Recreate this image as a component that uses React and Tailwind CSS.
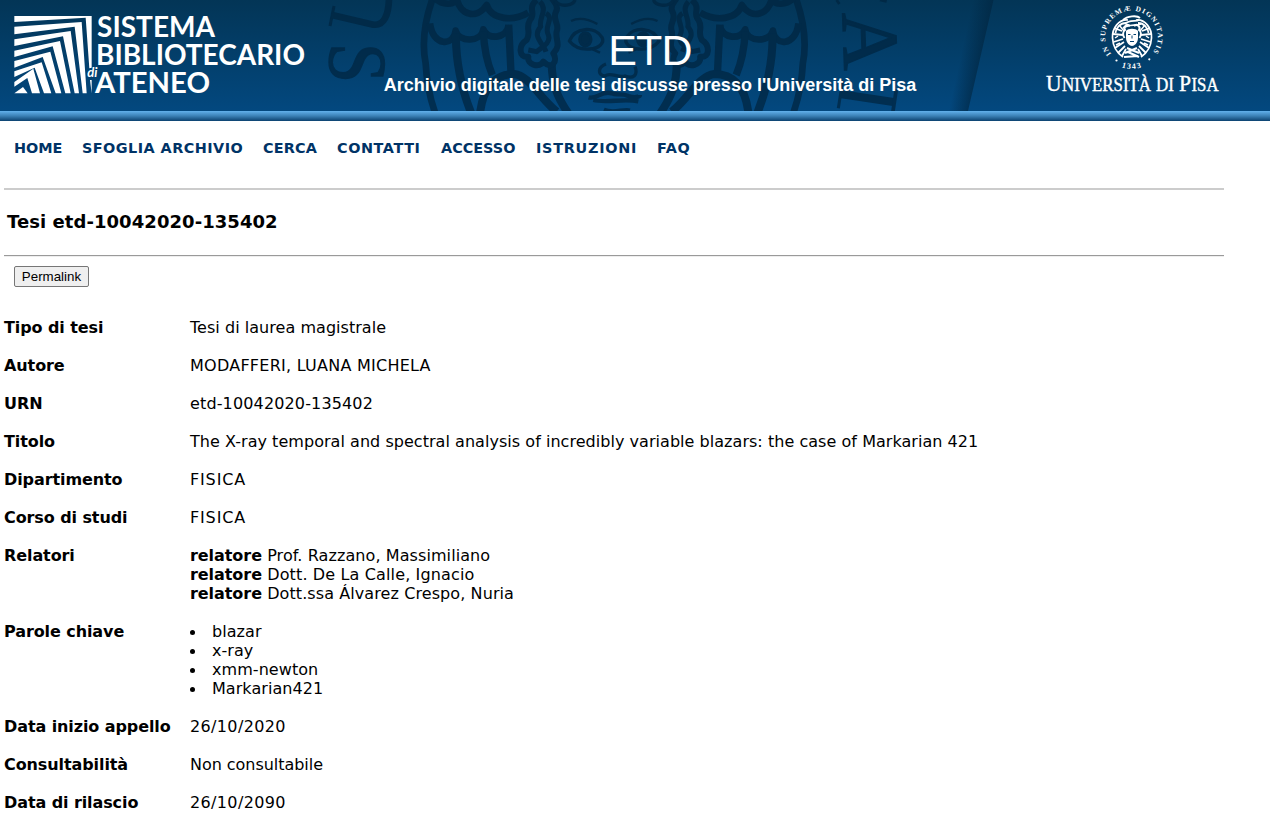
const nav = [
  ["HOME", "w-[68px]"],
  ["SFOGLIA ARCHIVIO", "w-[181px] tracking-[0.46px]"],
  ["CERCA", "w-[74px] tracking-[0.15px]"],
  ["CONTATTI", "w-[104px] tracking-[0.58px]"],
  ["ACCESSO", "w-[95px]"],
  ["ISTRUZIONI", "w-[121px] tracking-[0.74px]"],
  ["FAQ", "tracking-[0.6px]"],
];

const supervisors = [
  ["Prof. Razzano, Massimiliano", "tracking-[0.09px]"],
  ["Dott. De La Calle, Ignacio", "tracking-[0.14px]"],
  ["Dott.ssa Álvarez Crespo, Nuria", "tracking-[0.09px]"],
];
const keywords = ["blazar", "x-ray", "xmm-newton", "Markarian421"];

function Row({ label, track = "", children }) {
  return (
    <div className="flex">
      <dt className="w-[186px] shrink-0 font-bold tracking-[-0.09px]">{label}</dt>
      <dd className={track}>{children}</dd>
    </div>
  );
}

function LibraryLogo() {
  return (
    <svg width="320" height="111" viewBox="0 0 320 111" fill="#fff" className="relative">
      <g transform="scale(0.33333)">
        <path d="M43 48H275V203L268 205L257 53L43 66Z M270 240H275V280Z" />
        <path d="M43 80L245 66L260 280H248L224 80L43 103Z" />
        <path d="M43 118L212 93L237 280H224L189 109L43 138Z" />
        <path d="M43 152L180 123L212 280H196L158 139L43 171Z" />
        <path d="M43 183L151 155L184 280H167L128 171L43 203Z" />
        <path d="M43 214L125 187L154 280H132L104 203L43 231Z" />
        <path d="M43 246L100 206L120 280H96L82 234L43 260Z" />
        <path d="M43 280L69 261L83 280Z" />
      </g>
      <g fontFamily="Lato, sans-serif" fontWeight="700" fontSize="28.5">
        <text x="97" y="37.3" textLength="118" lengthAdjust="spacingAndGlyphs">SISTEMA</text>
        <text x="96" y="65.3" textLength="209" lengthAdjust="spacingAndGlyphs">BIBLIOTECARIO</text>
        <text x="95" y="93.3" textLength="115" lengthAdjust="spacingAndGlyphs">ATENEO</text>
      </g>
      <text x="87.3" y="77.3" fontFamily="Lato, sans-serif" fontStyle="italic" fontWeight="700" fontSize="13">di</text>
    </svg>
  );
}

function Wing() {
  return (
    <g fill="none" stroke="#012540" strokeWidth="20" strokeLinejoin="round">
      <path d="M368 -5C345 60 335 130 347 190C350 250 358 290 376 340" />
      <path d="M360 70C368 140 432 140 437 92C445 128 515 128 520 88C530 120 590 118 596 76" />
      <path d="M438 100C436 180 455 270 484 340" strokeWidth="24" />
      <path d="M520 95C522 140 530 185 547 225" strokeWidth="22" />
      <path d="M596 74L603 218" strokeWidth="22" />
      <path d="M510 340C520 255 560 222 612 222C660 228 685 290 740 335" strokeWidth="24" />
      <path d="M375 -5C400 18 435 15 440 -5C450 45 500 60 530 15C545 60 610 65 655 38" strokeWidth="20" />
      <path d="M725 190C726 250 740 290 775 340" strokeWidth="24" />
      <path d="M680 0C650 25 680 40 660 60C645 85 665 95 650 120C625 135 625 175 655 170C650 195 690 205 700 185C725 210 745 185 730 160C755 135 735 120 740 95C750 70 725 60 738 35C750 15 725 0 725 -8" strokeWidth="18" />
      <path d="M690 5C715 30 685 55 692 80C665 110 700 130 708 155M708 40C735 55 700 80 715 105C725 130 690 145 680 155L655 150" strokeWidth="15" />
      <path d="M735 3C755 25 790 15 795 0" strokeWidth="10" />
      <path d="M783 63C810 50 840 60 862 72" strokeWidth="7" />
      <path d="M778 123C795 80 855 78 876 112C885 130 865 145 840 147C815 149 795 145 778 123Z" strokeWidth="10" />
      <ellipse cx="826" cy="118" rx="17" ry="20" fill="#012540" strokeWidth="9" />
      <path d="M848 148L870 158" strokeWidth="7" />
    </g>
  );
}

function BannerArt() {
  return (
    <svg width="1270" height="111" viewBox="0 0 1270 111" className="absolute left-0 top-0">
      <defs>
        <linearGradient id="fold" x1="962" y1="50" x2="985" y2="55" gradientUnits="userSpaceOnUse">
          <stop offset="0" stopColor="#012641" stopOpacity="0" />
          <stop offset="1" stopColor="#012641" stopOpacity="0.8" />
        </linearGradient>
      </defs>
      <g opacity="0.72">
        <g transform="translate(310 0) scale(0.33333)"><Wing /></g>
        <g transform="translate(918.5 0) scale(-0.33333 0.33333)"><Wing /></g>
        <g transform="translate(310 0) scale(0.33333)" fill="none" stroke="#012540" strokeWidth="10">
          <path d="M888 192C865 200 860 225 885 228C900 215 925 235 945 228C970 238 985 225 975 200" />
          <path d="M836 292C860 300 875 270 905 280C920 287 935 278 955 288C975 295 990 290 990 285M850 300C890 310 940 295 985 304" strokeWidth="13" />
          <path d="M882 328C910 340 940 325 960 330" />
          <path d="M72 18L60 78" strokeWidth="9" />
          <path d="M66 45L190 74C222 78 236 45 237 -5" strokeWidth="20" />
        </g>
        <g transform="translate(620 0) scale(0.33333)" fill="none" stroke="#012540">
          <path d="M668 243L655 325" strokeWidth="9" />
          <path d="M660 282L820 306" strokeWidth="24" />
          <path d="M829 268L818 340" strokeWidth="11" />
          <path d="M650 0L658 12M780 0L800 4" strokeWidth="8" />
        </g>
        <g fill="#012540" stroke="#012540" strokeWidth="1.4" fontFamily="'Liberation Serif', serif">
          <text transform="translate(329.5 43) rotate(90)" fontSize="82" textLength="40" lengthAdjust="spacingAndGlyphs">S</text>
          <text transform="translate(842.5 13) rotate(88)" fontSize="80">A</text>
        </g>
      </g>
      <path d="M970 0H993.5L968 111H948Z" fill="url(#fold)" />
    </svg>
  );
}

function Cherub() {
  return (
    <g>
      <g fill="none" stroke="#fff">
        {[-1, 1].map((s) => (
          <g key={s} transform={`translate(1132 37) scale(${s} 1)`}>
            <path d="M4 -17C13 -18 20 -9 19.5 1C19 10 15 16 9 20" strokeWidth="1.7" />
            <path d="M6 -14C12 -14 16 -9 16.5 -4M10 -6L18 -9M9 -2L19 -3M9 2L18.5 5M8 5L17 11M7 9L14 16M6 12L10 19" strokeWidth="1.8" />
            <path d="M13 -12L8 -6M14 -1L17 1M12 6L16 8" strokeWidth="1.5" />
            <path d="M2 -11C5 -14 9 -10 7 -7C10 -5 9 -1 7.5 1" strokeWidth="2" />
          </g>
        ))}
        <path d="M1123 20C1127 16 1137 15 1140 18M1125 24C1129 19 1136 22 1139 20M1123 28C1128 24 1136 26 1141 24" strokeWidth="1.8" />
        <path d="M1127 48L1139 53M1137 48L1125 53M1124 57L1138 56M1128 52L1139 57" strokeWidth="2.2" />
      </g>
      <path d="M1126 31C1128 28 1136 28 1138 31V38C1138 43 1134 46 1132 46S1126 43 1126 38Z" fill="#fff" />
      <path d="M1128 34.5H1130.5M1133.5 34.5H1136M1132 35.5V38.5M1130 41.5H1134" stroke="#034170" strokeWidth="1" fill="none" />
    </g>
  );
}

function UniversityLogo() {
  return (
    <svg width="290" height="111" viewBox="980 0 290 111" fill="#fff" className="relative">
      <defs>
        <path id="motto" d="M1111.3 53.8A26.3 26.3 0 1 1 1148 57.5" />
        <path id="year" d="M1112 61.8A31.5 31.5 0 0 0 1152 61.8" />
      </defs>
      <Cherub />
      <g fontFamily="'Liberation Serif', serif" fontWeight="700">
        <text fontSize="7.2" letterSpacing="1.25"><textPath href="#motto">IN SUPREMÆ DIGNITATIS</textPath></text>
        <text fontSize="8" textAnchor="middle" letterSpacing="1.3"><textPath href="#year" startOffset="50%">1343</textPath></text>
      </g>
      <circle cx="1116.5" cy="60.5" r="1.1" />
      <circle cx="1149.3" cy="59.3" r="1.1" />
      <g fontFamily="'Liberation Serif', serif" fontSize="18.5" stroke="#fff" strokeWidth="0.4">
        <text x="1046" y="90.7" fontSize="23" textLength="15.5" lengthAdjust="spacingAndGlyphs">U</text>
        <text x="1062" y="90.7" textLength="89" lengthAdjust="spacingAndGlyphs">NIVERSITÀ</text>
        <text x="1156" y="90.7" textLength="18" lengthAdjust="spacingAndGlyphs">DI</text>
        <text x="1179" y="90.7" fontSize="23" textLength="12" lengthAdjust="spacingAndGlyphs">P</text>
        <text x="1191.5" y="90.7" textLength="27" lengthAdjust="spacingAndGlyphs">ISA</text>
      </g>
    </svg>
  );
}

export default function App() {
  return (
    <div className="h-[817px] w-[1270px] overflow-hidden bg-white font-['DejaVu_Sans',sans-serif] text-[16px] leading-[19px] text-black">
      <header className="relative flex h-[111px] bg-linear-to-b from-[#033556] to-[#03487f]">
        <BannerArt />
        <LibraryLogo />
        <div className="relative flex w-[660px] flex-col items-center pt-[25px] font-['Liberation_Sans',sans-serif] text-white">
          <h1 className="text-[43px] leading-[50px] tracking-[-0.9px]">ETD</h1>
          <h2 className="whitespace-nowrap text-[18px] font-bold leading-5">Archivio digitale delle tesi discusse presso l'Università di Pisa</h2>
        </div>
        <UniversityLogo />
      </header>
      <div className="h-2.5 bg-linear-to-b from-[#62b1ec] via-[#3a80b5] to-[#0b4270]" />
      <nav className="flex pl-3.5 pt-[18px] text-[14.4px] font-bold text-[#003366]">
        {nav.map(([name, cls]) => <a key={name} className={cls}>{name}</a>)}
      </nav>
      <main className="w-[1224px] pl-1">
        <div className="mt-[30px] h-0.5 bg-[#ccc]" />
        <h3 className="pl-[3px] pt-[22px] text-[18px] font-bold tracking-[0.06px]">Tesi etd-10042020-135402</h3>
        <div className="mt-6 h-0.5 border-b border-t border-b-[#eee] border-t-[#9a9a9a]" />
        <button className="ml-2.5 mt-[9px] block h-[21px] w-[75px] rounded-[2px] border border-[#767676] bg-[#efefef] font-['Liberation_Sans',sans-serif] text-[13.33px] leading-[19px]">Permalink</button>
        <dl className="flex flex-col gap-[19px] pt-[31px]">
          <Row label="Tipo di tesi" track="tracking-[0.04px]">Tesi di laurea magistrale</Row>
          <Row label="Autore" track="tracking-[0.25px]">MODAFFERI, LUANA MICHELA</Row>
          <Row label="URN" track="tracking-[0.14px]">etd-10042020-135402</Row>
          <Row label="Titolo" track="tracking-[0.04px]">The X-ray temporal and spectral analysis of incredibly variable blazars: the case of Markarian 421</Row>
          <Row label="Dipartimento" track="tracking-[0.85px]">FISICA</Row>
          <Row label="Corso di studi" track="tracking-[0.85px]">FISICA</Row>
          <Row label="Relatori">
            {supervisors.map(([name, cls]) => (
              <div key={name} className={cls}><b className="tracking-[-0.06px]">relatore</b> {name}</div>
            ))}
          </Row>
          <Row label="Parole chiave" track="tracking-[0.06px]">
            <ul>
              {keywords.map((word) => (
                <li key={word} className="flex items-center">
                  <span className="mr-[17px] mt-0.5 h-[5px] w-[5px] rounded-full bg-black" />{word}
                </li>
              ))}
            </ul>
          </Row>
          <Row label="Data inizio appello" track="tracking-[0.36px]">26/10/2020</Row>
          <Row label="Consultabilità" track="tracking-[-0.04px]">Non consultabile</Row>
          <Row label="Data di rilascio" track="tracking-[0.36px]">26/10/2090</Row>
        </dl>
      </main>
    </div>
  );
}
